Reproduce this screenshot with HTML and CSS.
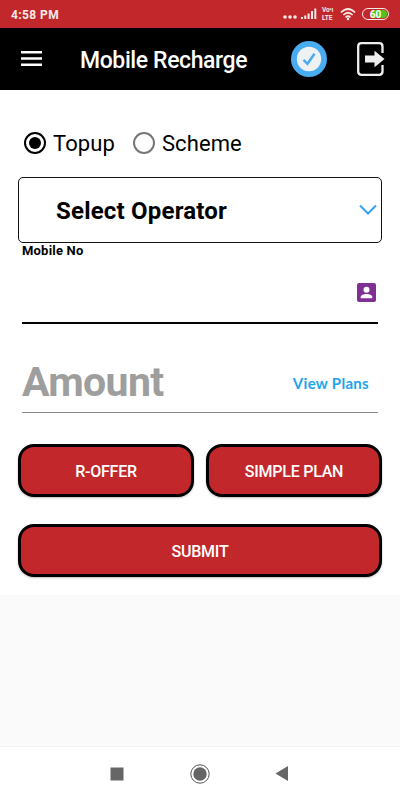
FILE: index.html
```html
<!DOCTYPE html>
<html lang="en">
<head>
<meta charset="utf-8">
<title>Mobile Recharge</title>
<link rel="stylesheet" href="styles.css">
</head>
<body>
<div class="status">
  <span class="time">4:58 PM</span>
  <div class="indicators">
    <svg class="dots" width="14" height="14" viewBox="0 0 14 14"><circle cx="2" cy="10" r="1.800"/><circle cx="7" cy="10" r="1.800"/><circle cx="12" cy="10" r="1.800"/></svg>
    <svg class="signal" width="16" height="14" viewBox="0 0 16 14"><path d="M0 10h2v2H0zM3.300 8.500h2V12h-2zM6.600 6.500h2V12h-2zM10 4h2v8h-2zM13.300 1.500h2V12h-2z"/></svg>
    <div class="volte"><span>Vo•ı</span><span>LTE</span></div>
    <svg class="wifi" width="16" height="14" viewBox="0 0 16 14"><path d="M.9 5.500Q8-1.500 15.100 5.500M3.300 8Q8 3.500 12.700 8M5.600 10.300Q8 8.200 10.400 10.300"/><circle cx="8" cy="12" r="1.300"/></svg>
    <div class="battery"><span>60</span></div>
  </div>
</div>
<header class="appbar">
  <svg class="menu" width="21" height="16" viewBox="0 0 21 16"><path d="M0 0h21v2.500H0zM0 6.300h21v2.500H0zM0 12.600h21v2.500H0z"/></svg>
  <h1>Mobile Recharge</h1>
  <svg class="check" width="36" height="36" viewBox="0 0 36 36"><circle cx="18" cy="18" r="18" fill="#49abf0"/><circle cx="18" cy="18" r="12.200" fill="#edf1f3"/><path d="M12.500 18.800l4 4 7-10" fill="none" stroke="#49abf0" stroke-width="2.500"/></svg>
  <svg class="exit" width="28" height="34" viewBox="0 0 28 34"><path d="M25.500 11V4.500Q25.500 1.200 22.200 1.200H4.500Q1.200 1.200 1.200 4.500v25Q1.200 32.800 4.500 32.800h17.700q3.300 0 3.300-3.300V23" fill="none" stroke="#eee" stroke-width="2.300"/><path d="M8 13.500h9.500V8.800L27.500 17l-10 8.200v-4.700H8z" fill="#eee"/></svg>
</header>
<main>
  <div class="radios">
    <div class="radio on"><span class="ring"></span><span>Topup</span></div>
    <div class="radio"><span class="ring"></span><span>Scheme</span></div>
  </div>
  <div class="select"><span>Select Operator</span><svg width="18" height="12" viewBox="0 0 18 12"><path d="M1 1.500l8 8 8-8"/></svg></div>
  <label>Mobile No</label>
  <div class="field mobile"><svg width="19" height="19" viewBox="0 0 19 19"><rect width="19" height="19" rx="2" fill="#803093"/><circle cx="9.500" cy="6.800" r="3" fill="#fff"/><path d="M3.700 15.200v-1.100c0-4 11.600-4 11.600 0v1.100z" fill="#fff"/></svg></div>
  <div class="field amount"><span class="hint">Amount</span><span class="plans">View Plans</span></div>
  <div class="buttons"><div class="btn">R-OFFER</div><div class="btn">SIMPLE PLAN</div></div>
  <div class="btn submit">SUBMIT</div>
</main>
<nav>
  <svg width="14" height="14" viewBox="0 0 14 14"><path d="M.5.500h13v13H.5z"/></svg>
  <svg width="20" height="20" viewBox="0 0 20 20"><circle cx="10" cy="10" r="9.200" fill="none" stroke="#555" stroke-width="1"/><circle cx="10" cy="10" r="6.700"/></svg>
  <svg width="13" height="15" viewBox="0 0 13 15"><path d="M13 0v15L.5 7.500z"/></svg>
</nav>
</body>
</html>
```
FILE: styles.css
```css
* { box-sizing: border-box; }
body { margin: 0; width: 400px; height: 800px; background: #fafafa; font-family: Roboto, sans-serif; color: #000; display: flex; flex-direction: column; overflow: hidden; }
svg { display: block; flex: none; }
.status { height: 28px; background: #c2282b; color: #f9e8e8; display: flex; align-items: center; justify-content: space-between; padding: 0 11px; }
.time { font-size: 12px; font-weight: 700; letter-spacing: .4px; padding-top: 1px; }
.indicators { display: flex; align-items: center; fill: #f9e8e8; }
.dots { margin-right: 4px; }
.signal { margin-right: 5px; }
.volte { width: 13px; margin-right: 5px; font-size: 6.5px; line-height: 8px; font-weight: 700; display: flex; flex-direction: column; }
.volte span { white-space: nowrap; }
.volte span:first-child { letter-spacing: -.2px; }
.wifi { margin-right: 6px; }
.wifi path { fill: none; stroke: #f9e8e8; stroke-width: 1.7; }
.battery { width: 27px; height: 12px; border: 1px solid #f9e8e8; border-radius: 6px; padding: 1px; }
.battery span { display: block; height: 8px; border-radius: 4px; line-height: 9px; text-align: center; font-size: 10px; font-weight: 700; color: #fff; background: linear-gradient(90deg, transparent 35%, #4fc51b 35%); }
.appbar { height: 62px; background: #000; color: #fff; display: flex; align-items: center; padding: 0 15px 0 21px; }
.menu { fill: #fff; margin-right: 38px; }
.appbar h1 { margin: 3px 0 0; font-size: 23px; line-height: 28px; font-weight: 500; letter-spacing: -.4px; width: 211px; white-space: nowrap; }
.check { margin-left: 1px; }
.exit { margin-left: 30px; }
main { height: 505px; background: #fff; padding: 37px 18px 0; }
.radios { display: flex; height: 32px; gap: 18px; padding-left: 6px; font-size: 22px; letter-spacing: .1px; }
.radio { display: flex; align-items: center; gap: 7px; line-height: 32px; }
.radio span:last-child { padding-top: 1px; }
.ring { width: 22px; height: 22px; border: 2px solid #777; border-radius: 50%; display: flex; align-items: center; justify-content: center; }
.on .ring { border-color: #000; }
.on .ring::after { content: ""; width: 12px; height: 12px; border-radius: 50%; background: #000; }
.select { margin-top: 18px; height: 66px; border: 1px solid #111; border-radius: 5px; padding: 2px 4px 0 37px; display: flex; align-items: center; justify-content: space-between; font-size: 24px; font-weight: 700; letter-spacing: .2px; }
.select svg { fill: none; stroke: #35a1ef; stroke-width: 2; margin-top: -3px; }
label { display: block; margin-left: 4px; height: 16px; font-size: 13px; line-height: 16px; font-weight: 700; letter-spacing: .2px; }
.field { margin: 0 4px; display: flex; align-items: center; }
.mobile { height: 65px; border-bottom: 2px solid #000; justify-content: flex-end; padding: 3px 2px 0 0; }
.amount { height: 89px; border-bottom: 1px solid #888; justify-content: space-between; padding: 28px 9px 0 0; }
.hint { font-size: 41px; line-height: 48px; font-weight: 700; color: #9e9e9e; letter-spacing: -.65px; }
.plans { font-family: Lato, sans-serif; font-size: 15px; font-weight: 700; color: #1ba5ed; letter-spacing: .3px; padding-top: 2px; }
.buttons { display: flex; gap: 12px; margin-top: 31px; }
.btn { flex: 1; height: 53px; border: 3px solid #000; border-radius: 16px; background: #c2282b; color: #fff; display: flex; align-items: center; justify-content: center; font-size: 16px; letter-spacing: -.25px; font-weight: 500; box-shadow: 0 1px 2px rgba(0,0,0,.25); padding-top: 1px; }
.submit { margin-top: 27px; }
nav { margin-top: auto; height: 54px; background: #fff; border-top: 1px solid #f0f0f0; display: flex; align-items: center; padding-left: 110px; fill: #666; }
nav svg + svg { margin-left: 66px; }
nav svg:last-child { margin-left: 65px; }
```
